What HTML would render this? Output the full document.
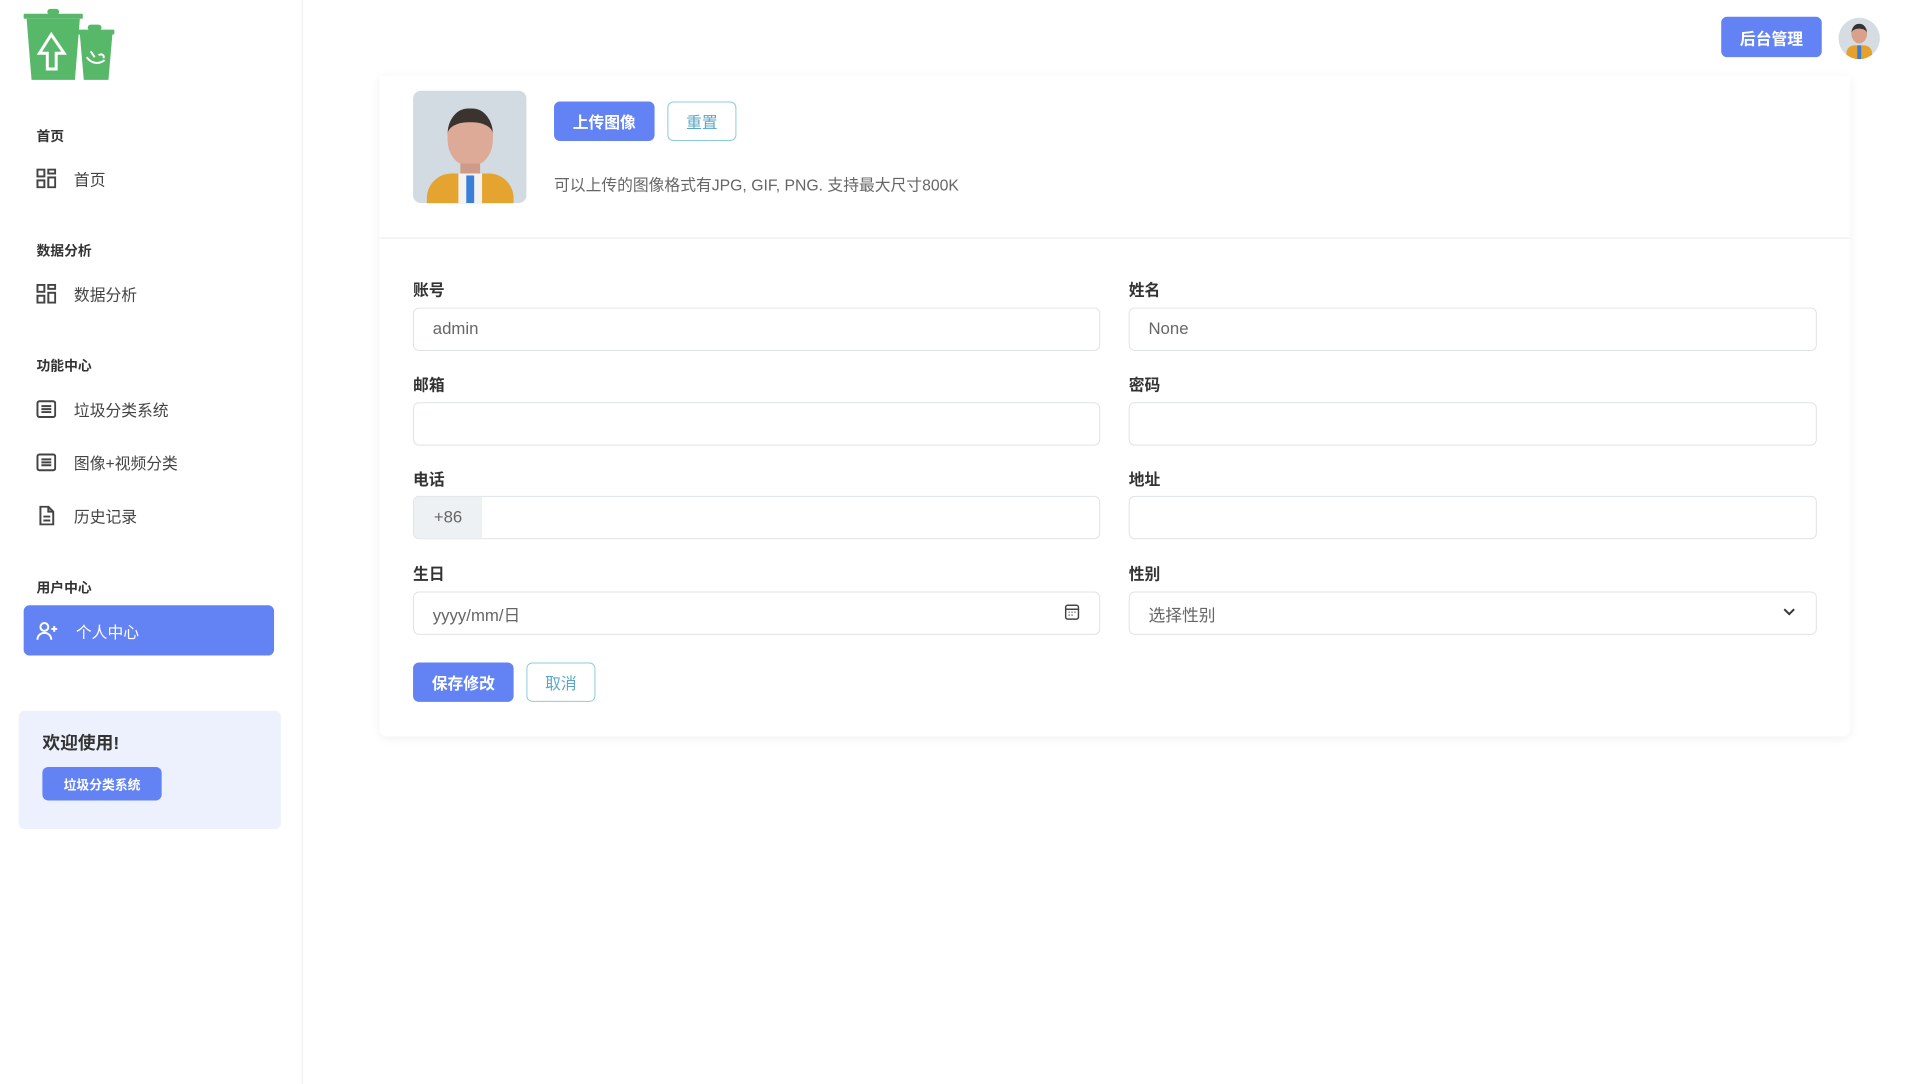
<!DOCTYPE html>
<html><head><meta charset="utf-8"><style>
*{box-sizing:border-box;margin:0;padding:0}
body{width:1920px;height:1064px;background:#fff;font-family:"Liberation Sans","Noto Sans CJK SC",sans-serif;color:#384551;position:relative;overflow:hidden}
#w{position:absolute;left:0;top:0;width:1948px;height:1080px;transform:scale(0.9858);transform-origin:0 0}
.a{position:absolute}
.side{left:0;top:0;width:307px;height:1100px;border-right:1px solid #e9ebef;background:#fff}
.sec{left:37px;font-size:14px;font-weight:bold;color:#333}
.item{left:37px;font-size:16px;color:#444;display:flex;align-items:center;height:24px}
.item svg{margin-right:18px}
.card{left:385px;top:77px;width:1492px;height:670px;background:#fff;box-shadow:0 2px 10px rgba(0,0,0,.06);border-radius:0 0 8px 8px}
.lbl{font-size:16px;font-weight:bold;color:#333}
.inp{height:44px;border:1px solid #dfe3e8;border-radius:6px;background:#fff;font-size:17px;color:#666;padding-left:19px;display:flex;align-items:center}
.btn{border-radius:6px;display:flex;align-items:center;justify-content:center;font-size:16px}
.pri{background:#6383f5;color:#fff;font-weight:bold}
.out{border:1px solid #8ccbd8;color:#5aa8c6;background:#fff}
</style></head><body><div id="w">
<div class="a side"></div>
<svg class="a" style="left:22px;top:6px" width="96" height="78" viewBox="0 0 96 78">
<g fill="#58b86a"><rect x="2" y="8" width="60" height="5" rx="1"/><rect x="26" y="3" width="12" height="6" rx="3"/><path d="M5 13h54l-5 62H10z"/>
<rect x="56" y="24" width="38" height="5" rx="1"/><rect x="67" y="19" width="14" height="6" rx="3"/><path d="M59 29h33l-4 46H63z"/></g>
<path d="M30 29l-12 19h8v16h9V48h8z" fill="none" stroke="#fff" stroke-width="3"/>
<path d="M66 52c4 6 12 8 18 3M70 46l4 6M78 50c3-2 6 0 5 3" fill="none" stroke="#fff" stroke-width="2"/>
</svg>
<div class="a sec" style="top:128px">首页</div>
<div class="a item" style="top:169px"><svg width="20" height="20" viewBox="0 0 20 20" fill="none" stroke="#444" stroke-width="2"><rect x="1" y="1" width="7" height="7"/><rect x="12" y="1" width="7" height="4"/><rect x="1" y="12" width="7" height="7"/><rect x="12" y="9" width="7" height="10"/></svg>首页</div>
<div class="a sec" style="top:244px">数据分析</div>
<div class="a item" style="top:286px"><svg width="20" height="20" viewBox="0 0 20 20" fill="none" stroke="#444" stroke-width="2"><rect x="1" y="1" width="7" height="7"/><rect x="12" y="1" width="7" height="4"/><rect x="1" y="12" width="7" height="7"/><rect x="12" y="9" width="7" height="10"/></svg>数据分析</div>
<div class="a sec" style="top:361px">功能中心</div>
<div class="a item" style="top:403px"><svg width="20" height="20" viewBox="0 0 20 20" fill="none" stroke="#444" stroke-width="2"><rect x="1" y="2" width="18" height="16" rx="2"/><path d="M5 7h10M5 10h10M5 13h10"/></svg>垃圾分类系统</div>
<div class="a item" style="top:457px"><svg width="20" height="20" viewBox="0 0 20 20" fill="none" stroke="#444" stroke-width="2"><rect x="1" y="2" width="18" height="16" rx="2"/><path d="M5 7h10M5 10h10M5 13h10"/></svg>图像+视频分类</div>
<div class="a item" style="top:511px"><svg width="20" height="20" viewBox="0 0 20 20" fill="none" stroke="#444" stroke-width="2"><path d="M4 1h8l5 5v13H4z"/><path d="M12 1v5h5M7 11h7M7 15h7"/></svg>历史记录</div>
<div class="a sec" style="top:586px">用户中心</div>
<div class="a" style="left:24px;top:614px;width:254px;height:51px;background:#6383f5;border-radius:6px"></div>
<div class="a item" style="top:628px;color:#fff"><svg width="22" height="20" viewBox="0 0 22 20" fill="none" stroke="#fff" stroke-width="2"><circle cx="8" cy="6" r="4"/><path d="M1 19c0-4 3-7 7-7s7 3 7 7M18 5v6M15 8h6"/></svg>个人中心</div>
<div class="a" style="left:19px;top:721px;width:266px;height:120px;background:#edf1fd;border-radius:6px"></div>
<div class="a" style="left:43px;top:740px;font-size:18px;font-weight:bold;color:#333">欢迎使用!</div>
<div class="a btn pri" style="left:43px;top:778px;width:121px;height:34px;font-size:13px">垃圾分类系统</div>

<div class="a btn pri" style="left:1746px;top:17px;width:102px;height:41px;font-size:16px">后台管理</div>
<div class="a" style="left:1865px;top:18px;width:42px;height:42px;border-radius:50%;background:#d5dde3;overflow:hidden"><div class="a" style="left:13px;top:6px;width:16px;height:20px;border-radius:50%;background:#d9a18c;border-top:5px solid #333"></div><div class="a" style="left:8px;top:28px;width:26px;height:16px;background:#e6a12d;border-radius:8px 8px 0 0"></div><div class="a" style="left:19px;top:28px;width:4px;height:14px;background:#3a7bd5"></div></div>

<div class="a card"></div>
<div class="a" style="left:419px;top:92px;width:115px;height:114px;border-radius:8px;background:#d3dbe2;overflow:hidden">
<div class="a" style="left:35px;top:18px;width:46px;height:58px;border-radius:45%;background:#dcaa96;border-top:14px solid #3a3330"></div>
<div class="a" style="left:48px;top:74px;width:20px;height:14px;background:#cf9b88"></div>
<div class="a" style="left:14px;top:84px;width:88px;height:40px;background:#e5a430;border-radius:25px 25px 0 0"></div>
<div class="a" style="left:46px;top:84px;width:24px;height:30px;background:#f2f2f2"></div>
<div class="a" style="left:54px;top:86px;width:8px;height:28px;background:#3b7fd8"></div></div>
<div class="a btn pri" style="left:562px;top:103px;width:102px;height:40px">上传图像</div>
<div class="a btn out" style="left:677px;top:103px;width:70px;height:40px">重置</div>
<div class="a" style="left:562px;top:174px;font-size:16px;color:#666">可以上传的图像格式有JPG, GIF, PNG. 支持最大尺寸800K</div>
<div class="a" style="left:385px;top:241px;width:1492px;height:1px;background:#e8eaed"></div>

<div class="a lbl" style="left:419px;top:281px">账号</div>
<div class="a lbl" style="left:1145px;top:281px">姓名</div>
<div class="a inp" style="left:419px;top:312px;width:697px">admin</div>
<div class="a inp" style="left:1145px;top:312px;width:698px">None</div>
<div class="a lbl" style="left:419px;top:377px">邮箱</div>
<div class="a lbl" style="left:1145px;top:377px">密码</div>
<div class="a inp" style="left:419px;top:408px;width:697px"></div>
<div class="a inp" style="left:1145px;top:408px;width:698px"></div>
<div class="a lbl" style="left:419px;top:473px">电话</div>
<div class="a lbl" style="left:1145px;top:473px">地址</div>
<div class="a inp" style="left:419px;top:503px;width:697px;padding:0;overflow:hidden"><div style="width:69px;height:100%;background:#eef1f4;display:flex;align-items:center;justify-content:center;color:#666">+86</div></div>
<div class="a inp" style="left:1145px;top:503px;width:698px"></div>
<div class="a lbl" style="left:419px;top:569px">生日</div>
<div class="a lbl" style="left:1145px;top:569px">性别</div>
<div class="a inp" style="left:419px;top:600px;width:697px">yyyy/mm/日</div>
<svg class="a" style="left:1080px;top:613px" width="15" height="16" viewBox="0 0 15 16" fill="none" stroke="#444" stroke-width="1.5"><rect x="1" y="1" width="13" height="14" rx="2"/><path d="M1 5h13M4 8h1M7 8h1M10 8h1M4 11h1M7 11h1"/></svg>
<div class="a inp" style="left:1145px;top:600px;width:698px">选择性别</div>
<svg class="a" style="left:1808px;top:616px" width="14" height="10" viewBox="0 0 14 10" fill="none" stroke="#333" stroke-width="2"><path d="M2 2l5 5 5-5"/></svg>
<div class="a btn pri" style="left:419px;top:672px;width:102px;height:40px">保存修改</div>
<div class="a btn out" style="left:534px;top:672px;width:70px;height:40px">取消</div>
</div></body></html>
